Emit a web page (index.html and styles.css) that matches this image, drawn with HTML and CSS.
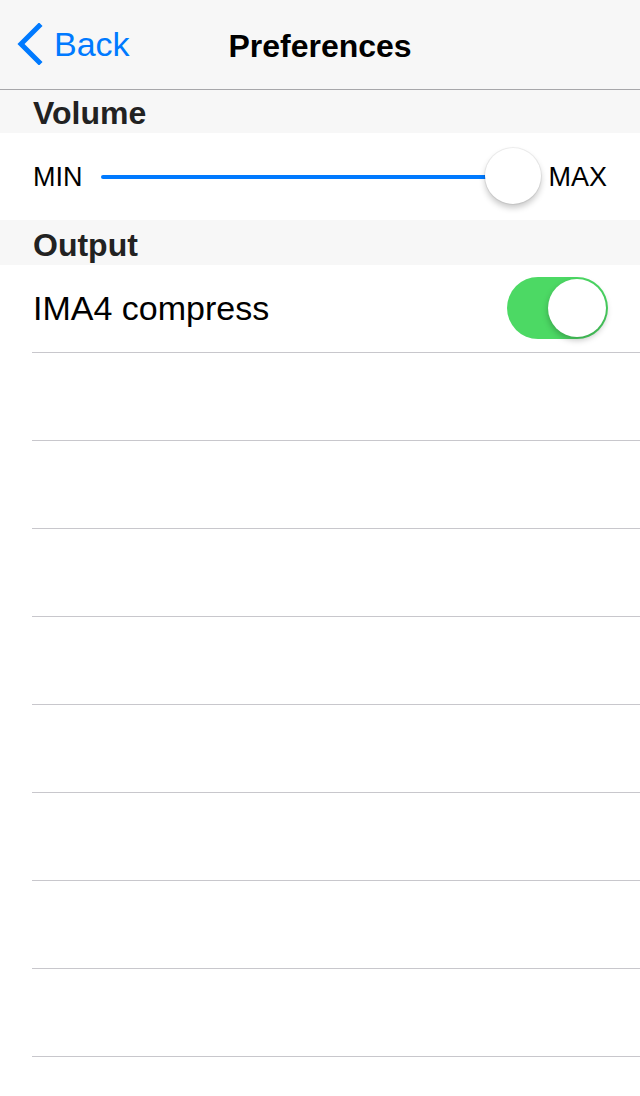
FILE: index.html
```html
<!DOCTYPE html>
<html lang="en">
<head>
    <meta charset="UTF-8">
    <meta name="viewport" content="width=device-width, initial-scale=1.0">
    <title>Preferences</title>
    <link rel="stylesheet" href="styles.css">
</head>
<body>
    <div class="navbar">
        <a class="back" href="#">
            <svg class="chevron" width="28" height="42" viewBox="0 0 28 42">
                <polyline points="24,3 6,21 24,39" fill="none" stroke="#007aff" stroke-width="5" stroke-linecap="square"/>
            </svg>
            <span>Back</span>
        </a>
        <div class="title">Preferences</div>
    </div>

    <div class="section-header header-volume">Volume</div>
    <div class="row slider-row">
        <span class="slider-label">MIN</span>
        <div class="slider">
            <div class="track"></div>
            <div class="thumb"></div>
        </div>
        <span class="slider-label">MAX</span>
    </div>

    <div class="section-header header-output">Output</div>
    <div class="row cell">
        <span class="cell-text">IMA4 compress</span>
        <div class="switch"><div class="knob"></div></div>
    </div>
    <div class="row cell"></div>
    <div class="row cell"></div>
    <div class="row cell"></div>
    <div class="row cell"></div>
    <div class="row cell"></div>
    <div class="row cell"></div>
    <div class="row cell"></div>
    <div class="row cell"></div>
    <div class="row cell"></div>
</body>
</html>
```

FILE: styles.css
```css
body {
    margin: 0;
    font-family: "Liberation Sans", Arial, sans-serif;
    background-color: white;
    color: #000;
    overflow: hidden;
}
.navbar {
    height: 89px;
    background-color: #f7f7f7;
    border-bottom: 1px solid #a7a7aa;
    display: flex;
    align-items: center;
    position: relative;
}
.back {
    display: flex;
    align-items: center;
    color: #007aff;
    text-decoration: none;
    font-size: 34px;
    padding-left: 15px;
}
.chevron {
    margin-right: 11px;
    margin-top: -2px;
}
.title {
    position: absolute;
    left: 0;
    right: 0;
    top: 28px;
    text-align: center;
    font-size: 32px;
    font-weight: bold;
    pointer-events: none;
}
.section-header {
    background-color: #f7f7f7;
    color: #222;
    font-size: 32px;
    font-weight: bold;
    padding-left: 33px;
    box-sizing: border-box;
}
.header-volume {
    height: 43px;
    padding-top: 5px;
}
.header-output {
    height: 45px;
    padding-top: 7px;
}
.row {
    display: flex;
    align-items: center;
    box-sizing: border-box;
}
.slider-row {
    height: 87px;
    padding: 0 33px;
}
.slider-label {
    font-size: 27px;
    padding-top: 2px;
}
.slider {
    flex: 1;
    height: 60px;
    margin: 0 7px 0 18px;
    position: relative;
}
.track {
    position: absolute;
    left: 0;
    right: 20px;
    top: 28px;
    height: 4px;
    border-radius: 2px;
    background-color: #007aff;
}
.thumb {
    position: absolute;
    right: 0;
    top: 1px;
    width: 56px;
    height: 56px;
    border-radius: 50%;
    background-color: white;
    box-shadow: 0 0 0 1px rgba(0,0,0,0.06), 0 4px 6px rgba(0,0,0,0.22);
}
.cell {
    height: 88px;
    margin-left: 32px;
    padding-right: 32px;
    border-bottom: 1px solid #c8c7cc;
    justify-content: space-between;
}
.cell-text {
    font-size: 34px;
    padding-left: 1px;
}
.switch {
    width: 101px;
    height: 62px;
    border-radius: 31px;
    background-color: #4cd964;
    position: relative;
    margin-top: -2px;
}
.knob {
    position: absolute;
    right: 2px;
    top: 2px;
    width: 58px;
    height: 58px;
    border-radius: 50%;
    background-color: white;
    box-shadow: 0 3px 6px rgba(0,0,0,0.25);
}
```
